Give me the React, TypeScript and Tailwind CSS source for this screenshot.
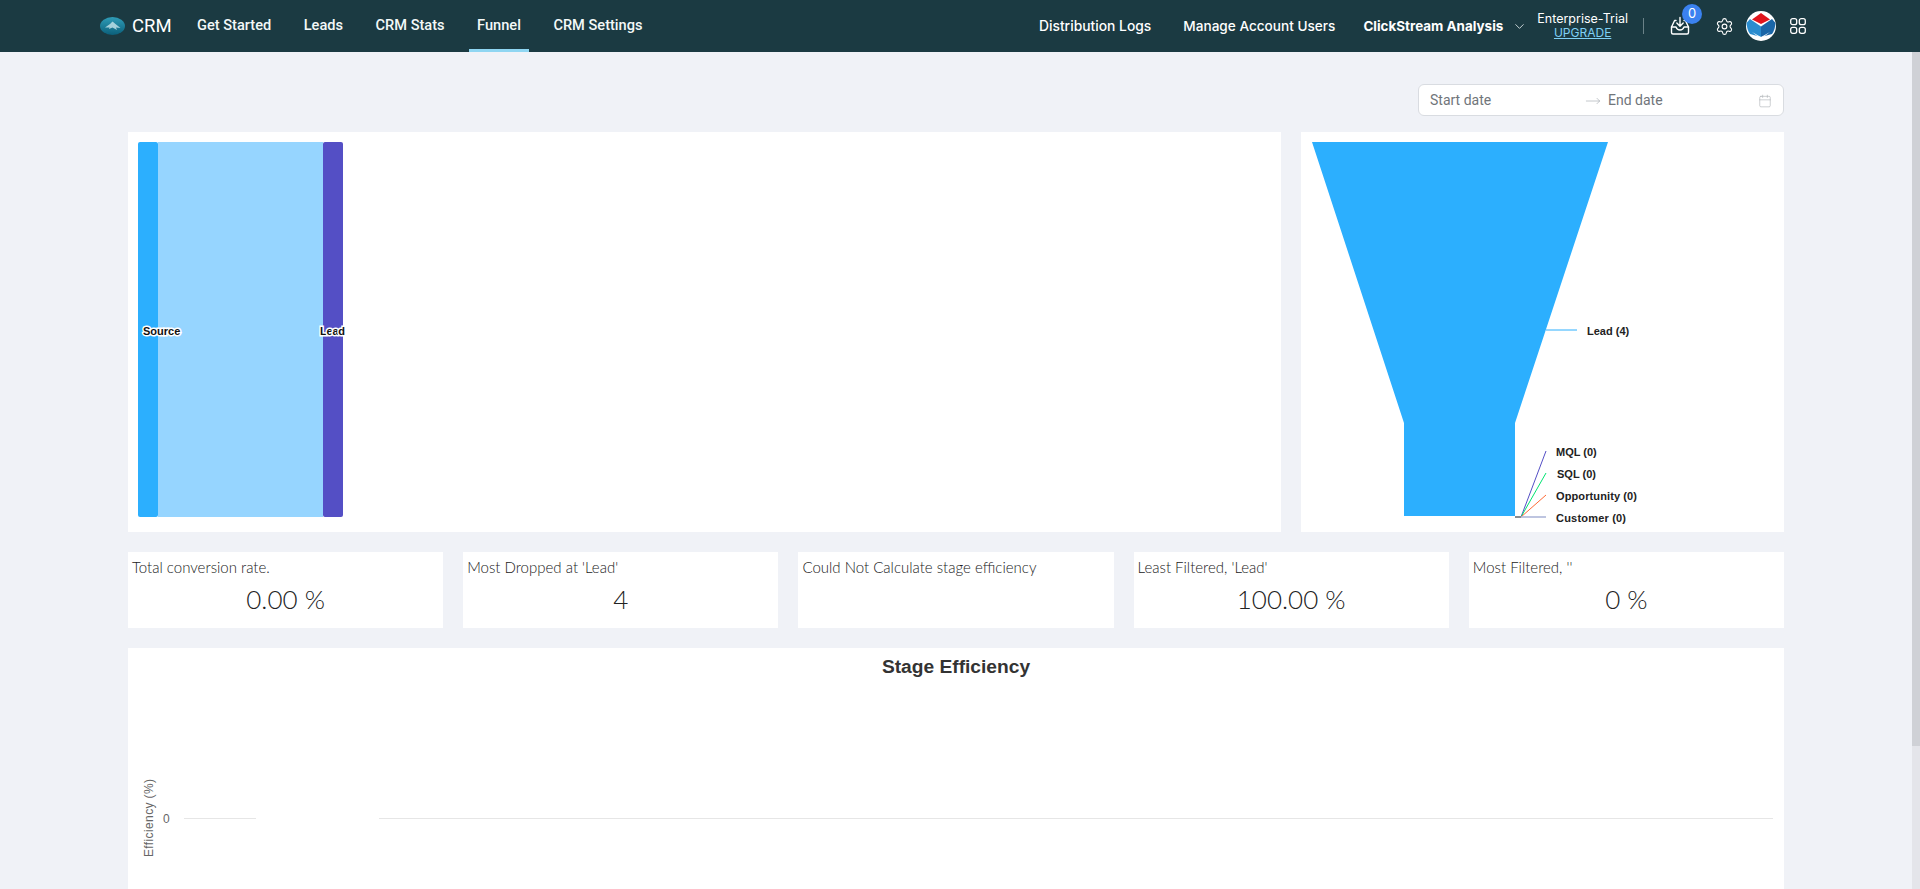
import React from "react";
import { ChevronDown, Settings, Calendar, MoveRight } from "lucide-react";

const nav = ["Get Started", "Leads", "CRM Stats", "Funnel", "CRM Settings"];
const kpis = [
  ["Total conversion rate.", "0.00 %"],
  ["Most Dropped at 'Lead'", "4"],
  ["Could Not Calculate stage efficiency", ""],
  ["Least Filtered, 'Lead'", "100.00 %"],
  ["Most Filtered, ''", "0 %"],
];

function Logo() {
  return (
    <svg width="25" height="18" viewBox="0 0 25 18" className="shrink-0">
      <defs>
        <linearGradient id="lg" x1="0" y1="0" x2="0" y2="1">
          <stop offset="0" stopColor="#2f9db8" />
          <stop offset="1" stopColor="#0b5f7a" />
        </linearGradient>
      </defs>
      <ellipse cx="12.5" cy="9" rx="12.5" ry="9" fill="url(#lg)" />
      <path d="M5 10.500 L10 7 L12.5 4.500 L15.500 7 L20.500 11 L16 10.500 L17 13 L12.5 10.500 L9 12 L9.500 10.500 Z" fill="#b4d9e2" opacity="0.9" />
    </svg>
  );
}

function Avatar() {
  return (
    <svg width="30" height="30" viewBox="0 0 30 30" className="shrink-0">
      <circle cx="15" cy="15" r="15" fill="#fff" />
      <path d="M15 2 L24 8.500 L15 13 L6 8.500 Z" fill="#e0141c" />
      <path d="M0.500 12 L4 8 L15 15.500 L15 26 L4 23 Q1 19 0.500 12 Z" fill="#2a8ccf" />
      <path d="M29.500 12 L26 8 L15 15.500 L15 26 L26 23 Q29 19 29.500 12 Z" fill="#1a66a8" />
      <path d="M6 21 L15 26 L24 21 L15 28 Z" fill="#ffffff" opacity="0.9" />
    </svg>
  );
}

function InboxIcon() {
  return (
    <svg width="20" height="20" viewBox="0 0 20 20" fill="none" stroke="#fff" strokeWidth="1.4" strokeLinecap="round" strokeLinejoin="round">
      <path d="M6 4.500 L4.600 4.500 L1.500 11 L1.500 16.500 Q1.500 18 3 18 L17 18 Q18.500 18 18.500 16.500 L18.500 11 L15.400 4.500 L14 4.500" />
      <path d="M1.500 11 L6 11 Q7 14 10 14 Q13 14 14 11 L18.500 11" />
      <path d="M10 1.500 L10 10 M6.800 7 L10 10.200 L13.200 7" />
    </svg>
  );
}

function AppsIcon() {
  return (
    <svg width="16" height="16" viewBox="0 0 16 16" fill="none" stroke="#fff" strokeWidth="1.3">
      <rect x="0.700" y="0.700" width="6" height="6" rx="2" />
      <rect x="9.300" y="0.700" width="6" height="6" rx="2" />
      <rect x="0.700" y="9.300" width="6" height="6" rx="2" />
      <rect x="9.300" y="9.300" width="6" height="6" rx="2" />
    </svg>
  );
}

function Sankey() {
  const label = { fontFamily: "'Liberation Sans', sans-serif", fontSize: 11, fontWeight: 700, fill: "#111", stroke: "#fff", strokeWidth: 3, paintOrder: "stroke" } as React.CSSProperties;
  return (
    <svg width="240" height="400" viewBox="0 0 240 400" className="block">
      <rect x="30" y="10" width="165" height="375" fill="#96d5ff" />
      <rect x="10" y="10" width="20" height="375" rx="2" fill="#2caffe" />
      <rect x="195" y="10" width="20" height="375" rx="2" fill="#544fc5" />
      <text x="15" y="203" style={label}>Source</text>
      <text x="192" y="203" textLength="25" style={label}>Lead</text>
    </svg>
  );
}

function Funnel() {
  const t = { fontFamily: "'Liberation Sans', sans-serif", fontSize: 11, fontWeight: 700, fill: "#222" } as React.CSSProperties;
  return (
    <svg width="483" height="400" viewBox="0 0 483 400" className="block">
      <path d="M11 10 L307 10 L214 291 L214 384 L103 384 L103 291 Z" fill="#2caffe" />
      <path d="M245 198 L276 198" stroke="#2caffe" strokeWidth="1" fill="none" />
      <path d="M220 385 L245 319" stroke="#544fc5" strokeWidth="1" fill="none" />
      <path d="M220 385 L245 341" stroke="#00e272" strokeWidth="1" fill="none" />
      <path d="M220 385 L245 363" stroke="#fe6a35" strokeWidth="1" fill="none" />
      <path d="M214 385 L245 385" stroke="#a9b2d6" strokeWidth="1.5" fill="none" />
      <path d="M214 385 L220 385" stroke="#777" strokeWidth="1.5" fill="none" />
      <text x="286" y="203" style={t}>Lead (4)</text>
      <text x="255" y="324" style={t}>MQL (0)</text>
      <text x="256" y="346" style={t}>SQL (0)</text>
      <text x="255" y="368" textLength="81" style={t}>Opportunity (0)</text>
      <text x="255" y="390" textLength="70" style={t}>Customer (0)</text>
    </svg>
  );
}

function EfficiencyChart() {
  const t = { fontFamily: "'Liberation Sans', sans-serif", fontSize: 12, fill: "#666" } as React.CSSProperties;
  return (
    <svg width="1656" height="241" viewBox="0 0 1656 241" className="block">
      <path d="M56 170.500 L128 170.500 M251 170.500 L1645 170.500" stroke="#e6e6e6" strokeWidth="1" />
      <text x="35" y="174.500" style={t}>0</text>
      <text transform="translate(25 209) rotate(-90)" textLength="78" style={t}>Efficiency (%)</text>
    </svg>
  );
}

export default function App() {
  return (
    <div className="h-screen w-full overflow-hidden bg-[#f0f2f7] flex flex-col font-['Inter',sans-serif]">
      <header className="h-[52px] shrink-0 bg-[#1b3a42] flex items-center pl-[100px] pr-[114px] text-white">
        <Logo />
        <span className="ml-[7px] w-[65px] text-[18.500px] font-normal font-['Roboto',sans-serif] leading-none">CRM</span>
        <nav className="flex h-full gap-[16.500px] -ml-[8px]">
          {nav.map((n) => (
            <div key={n} className={`relative flex items-center px-2 text-[14.600px] font-medium font-['Roboto',sans-serif] text-[#f3f8f8] ${n === "Funnel" ? "border-b-[3px] border-b-[#8fd6f2] pt-[3px]" : ""}`}>
              {n}
            </div>
          ))}
        </nav>
        <div className="ml-auto flex items-center text-[13.600px] font-medium">
          <span className="text-[13.850px]">Distribution Logs</span>
          <span className="ml-[32px]">Manage Account Users</span>
          <span className="ml-[28px] font-bold text-[13.450px]">ClickStream Analysis</span>
          <ChevronDown size={15} strokeWidth={1.5} className="ml-[9px] text-[#cfdadc]" />
          <div className="ml-[10px] flex flex-col items-center leading-[14px] text-[12.500px] font-normal">
            <span>Enterprise-Trial</span>
            <span className="text-[#7fd0f5] underline text-[12px]">UPGRADE</span>
          </div>
          <div className="ml-[15px] h-[16px] w-px bg-[#6b8288]" />
          <div className="relative ml-[26px]">
            <InboxIcon />
            <span className="absolute -top-[12px] left-[12px] w-5 h-5 rounded-full bg-[#3b82f0] flex items-center justify-center text-[13px] font-normal">0</span>
          </div>
          <Settings size={19} strokeWidth={1.4} className="ml-[25px]" />
          <div className="ml-[12px]"><Avatar /></div>
          <div className="ml-[14px]"><AppsIcon /></div>
        </div>
      </header>
      <div className="flex-1 min-h-0 flex">
        <main className="flex-1 min-w-0 overflow-hidden pl-[128px] pr-[128px] pt-[32px]">
          <div className="flex justify-end">
            <div className="w-[366px] h-[32px] rounded-[6px] border border-[#d9dce1] bg-white flex items-center pl-[11px] pr-[11px] pt-px text-[14px] text-[#70757a] font-['Roboto',sans-serif]">
              <span className="w-[155px]">Start date</span>
              <MoveRight size={16} strokeWidth={1} className="text-[#a8acb2]" />
              <span className="ml-[7px] flex-1">End date</span>
              <Calendar size={14} strokeWidth={1} className="text-[#a8acb2]" />
            </div>
          </div>
          <div className="mt-4 flex gap-5">
            <div className="w-[1153px] h-[400px] bg-white"><Sankey /></div>
            <div className="w-[483px] h-[400px] bg-white"><Funnel /></div>
          </div>
          <div className="mt-5 grid grid-cols-5 gap-5 font-['Lato',sans-serif] text-[#333]">
            {kpis.map(([a, b]) => (
              <div key={a} className="h-[76px] bg-white px-1 pt-[5px]">
                <div className="text-[15px] leading-5 font-light text-[#222]">{a}</div>
                <div className="mt-[6px] text-center text-[26px] font-light leading-8 text-[#222]">{b}</div>
              </div>
            ))}
          </div>
          <div className="mt-5 bg-white h-[400px]">
            <div className="pt-[7px] text-center text-[19.200px] leading-[24px] font-bold text-[#333] font-['Liberation_Sans',sans-serif]">Stage Efficiency</div>
            <div className="-mt-[31px]"><EfficiencyChart /></div>
          </div>
        </main>
        <div className="w-2 shrink-0 bg-[#e4e5ea] flex flex-col">
          <div className="h-[694px] bg-[#cfd1d6]" />
        </div>
      </div>
    </div>
  );
}
